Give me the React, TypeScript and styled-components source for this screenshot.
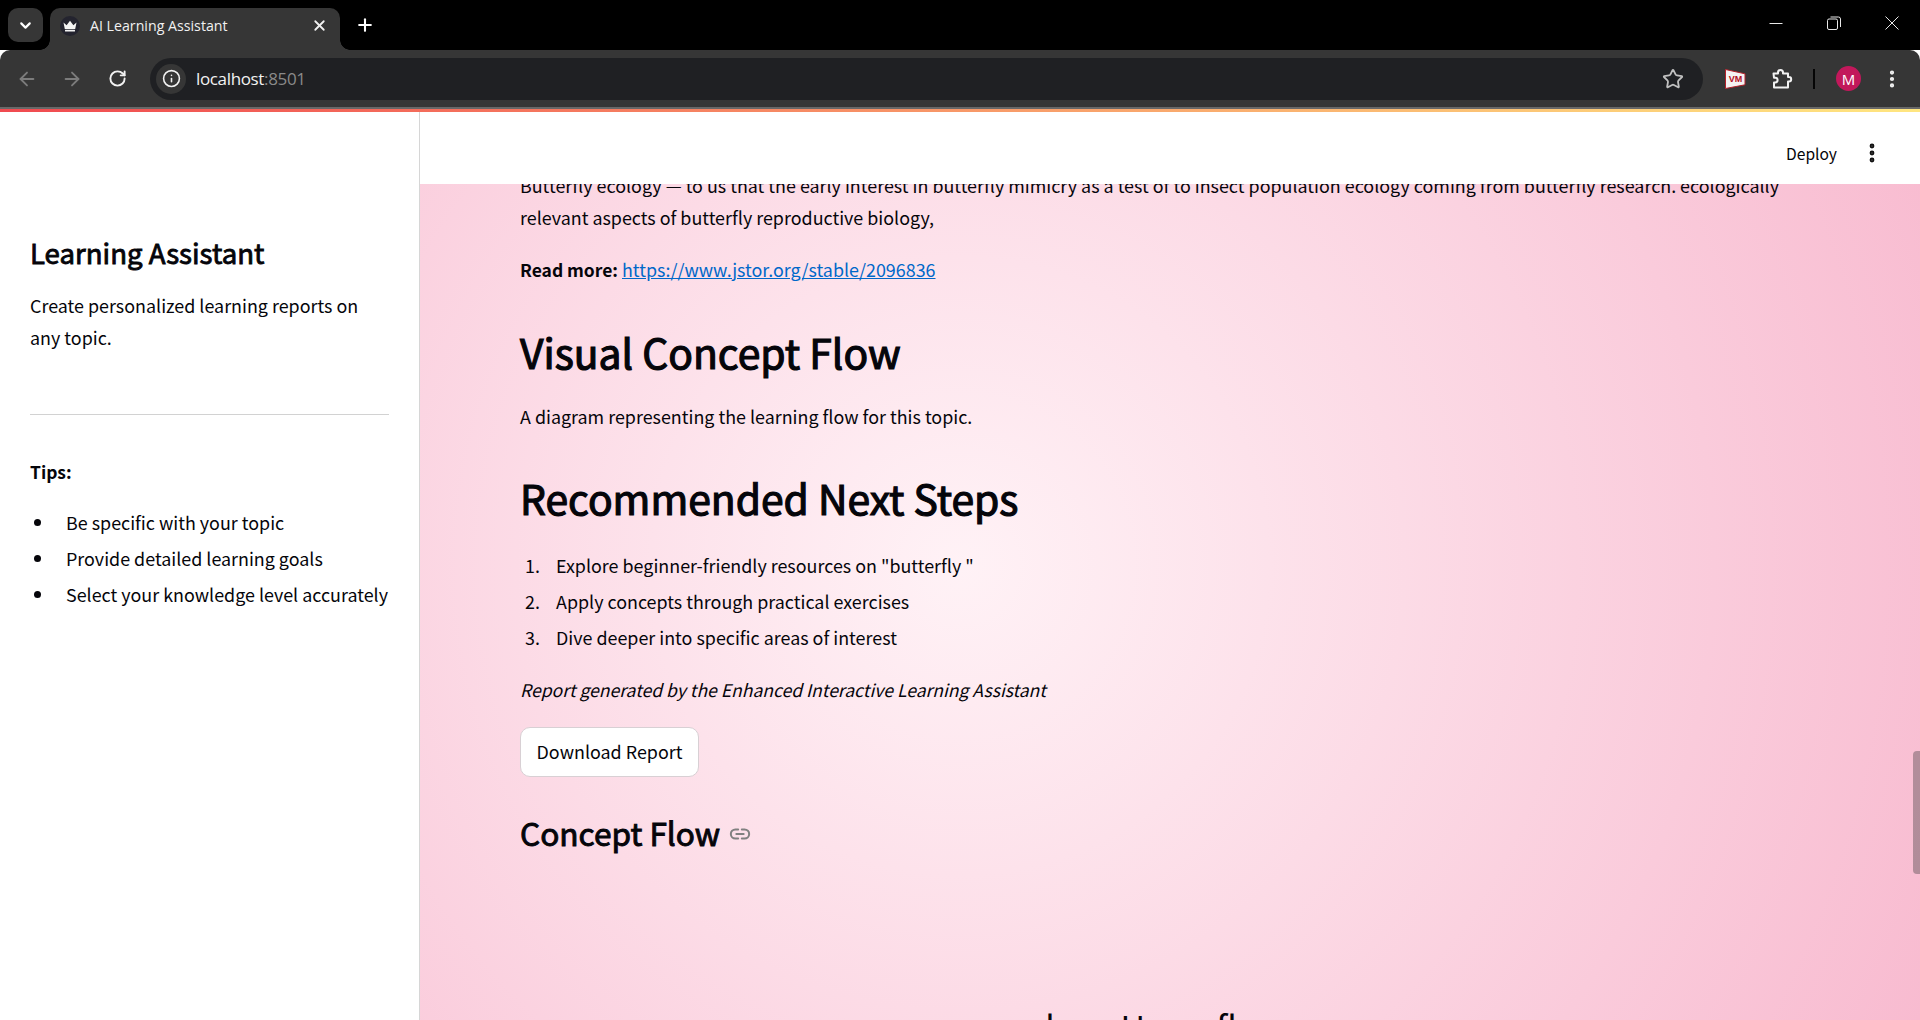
import React from "react";
import styled, { createGlobalStyle } from "styled-components";
import { ArrowLeft, ArrowRight, RotateCw, Star, ChevronDown, Plus, X, Info, EllipsisVertical } from "lucide-react";

const Global = createGlobalStyle`
  html, body { margin: 0; padding: 0; height: 100%; overflow: hidden; background: #fff; }
  #root { height: 100%; }
  * { box-sizing: border-box; }
  strong { font-size: 0.975em; }
  em { font-size: 0.98em; }
`;

const Page = styled.div`
  width: 1920px;
  height: 1020px;
  display: flex;
  flex-direction: column;
  overflow: hidden;
  font-family: "Noto Sans CJK SC", "Open Sans", sans-serif;
  color: #05050a;
`;

/* ---------- browser chrome ---------- */
const TabStrip = styled.div`
  height: 50px;
  background: #000;
  display: flex;
  align-items: flex-end;
  padding-left: 8px;
  flex: none;
`;
const TabSearch = styled.div`
  width: 35px;
  height: 34px;
  margin-bottom: 8px;
  border-radius: 10px;
  background: #363636;
  color: #fff;
  display: flex;
  align-items: center;
  justify-content: center;
`;
const Tab = styled.div`
  position: relative;
  width: 290px;
  height: 42px;
  margin-left: 7px;
  padding: 0 12px 7px 10px;
  background: #363636;
  border-radius: 10px 10px 0 0;
  display: flex;
  align-items: center;
  color: #f1f1f1;
  font-family: "Open Sans", sans-serif;
  font-size: 14.2px;
  &::before, &::after {
    content: "";
    position: absolute;
    bottom: 0;
    width: 10px;
    height: 10px;
  }
  &::before { left: -10px; background: radial-gradient(circle at 0 0, #000 9.5px, #363636 10px); }
  &::after { right: -10px; background: radial-gradient(circle at 100% 0, #000 9.5px, #363636 10px); }
`;
const Favicon = styled.div`
  width: 20px;
  height: 20px;
  border-radius: 50%;
  background: #24242f;
  display: flex;
  align-items: center;
  justify-content: center;
  margin-right: 10px;
  flex: none;
`;
const TabTitle = styled.span`
  flex: 1;
  white-space: nowrap;
`;
const NewTab = styled.div`
  margin: 0 0 8px 15px;
  height: 34px;
  display: flex;
  align-items: center;
  color: #fff;
`;
const WindowControls = styled.div`
  margin-left: auto;
  height: 50px;
  display: flex;
  align-items: center;
  color: #e8e8e8;
  padding: 0 21px 4px 0;
  gap: 44px;
`;
const Toolbar = styled.div`
  height: 57px;
  flex: none;
  background: #363636;
  border-radius: 10px 10px 0 0;
  display: flex;
  align-items: center;
  padding: 0 0 0 13px;
`;
const NavButton = styled.div<{ $dim?: boolean }>`
  width: 28px;
  display: flex;
  justify-content: center;
  color: ${(p) => (p.$dim ? "#7c7c7c" : "#f2f2f2")};
  margin-right: ${(p) => (p.$dim ? "17px" : "0")};
`;
const Omnibox = styled.div`
  width: 1553px;
  height: 42px;
  margin-left: 19px;
  border-radius: 21px;
  background: #1f2023;
  display: flex;
  align-items: center;
  padding: 0 0 0 6px;
  font-family: "Open Sans", sans-serif;
  font-size: 17px;
  letter-spacing: -0.35px;
`;
const SiteInfo = styled.div`
  width: 30px;
  height: 30px;
  border-radius: 50%;
  background: #363636;
  color: #f2f2f2;
  display: flex;
  align-items: center;
  justify-content: center;
  margin-right: 10px;
`;
const Host = styled.span`
  color: #f2f2f2;
`;
const Port = styled.span`
  color: #8a8a8a;
`;
const StarSlot = styled.div`
  margin-left: auto;
  margin-right: 19px;
  display: flex;
  color: #c0c0c0;
`;
const ToolbarIcons = styled.div`
  flex: 1;
  display: flex;
  align-items: center;
  padding-left: 21px;
`;
const IconSlot = styled.div<{ $gap: number }>`
  display: flex;
  align-items: center;
  margin-right: ${(p) => p.$gap}px;
  color: #f2f2f2;
`;
const Divider = styled.div`
  width: 2px;
  height: 20px;
  background: #050505;
  margin-right: 21px;
`;
const Avatar = styled.div`
  width: 25px;
  height: 25px;
  border-radius: 50%;
  background: #c2185b;
  color: #fff;
  font-family: "Open Sans", sans-serif;
  font-size: 15px;
  display: flex;
  align-items: center;
  justify-content: center;
  margin-right: 20px;
`;
const ChromeEdge = styled.div`
  height: 2px;
  flex: none;
  background: #686868;
`;
const Decoration = styled.div`
  height: 3px;
  flex: none;
  background: linear-gradient(90deg, #f04a50, #ffe680);
`;

/* ---------- app ---------- */
const Body = styled.div`
  flex: 1;
  min-height: 0;
  display: flex;
`;
const Sidebar = styled.aside`
  width: 420px;
  flex: none;
  background: #fff;
  border-right: 1px solid #d6d6d6;
  padding: 117px 30px 0;
`;
const SideTitle = styled.h2`
  margin: 0 0 14px;
  font-size: 27.6px;
  line-height: 46px;
  font-weight: 400;
  -webkit-text-stroke: 0.85px currentColor;
`;
const BodyText = styled.p<{ $gap?: number }>`
  margin: 0 0 ${(p) => p.$gap ?? 20}px;
  font-size: 17.9px;
  line-height: 32px;
`;
const TipsLabel = styled(BodyText)`
  margin-bottom: 18px;
`;
const Rule = styled.hr`
  margin: 61px 0 40px;
  border: none;
  border-top: 1px solid #d2d2d2;
`;
const BulletList = styled.ul`
  margin: 0;
  padding: 0;
  list-style: none;
  font-size: 17.9px;
  line-height: 32px;
  white-space: nowrap;
`;
const Bullet = styled.li`
  display: flex;
  align-items: center;
  margin-bottom: 4px;
  &::before {
    content: "";
    flex: none;
    width: 7px;
    height: 7px;
    border-radius: 50%;
    background: #05050a;
    margin: 0 25px 0 4px;
  }
`;
const OrderedList = styled.ol`
  margin: 0 0 20px;
  padding: 0;
  list-style: none;
  counter-reset: step;
  font-size: 17.9px;
  line-height: 32px;
`;
const Step = styled.li`
  display: flex;
  margin-bottom: 4px;
  counter-increment: step;
  &::before {
    content: counter(step) ".";
    flex: none;
    width: 31px;
    margin-left: 5px;
  }
`;
const Main = styled.main`
  position: relative;
  flex: 1;
  min-width: 0;
  display: flex;
  flex-direction: column;
  overflow: hidden;
  background: radial-gradient(circle at 540px 454px, #fff2f6 0%, #f8bbd0 100%);
`;
const Header = styled.header`
  height: 72px;
  flex: none;
  background: #fff;
  display: flex;
  align-items: center;
  justify-content: flex-end;
  padding: 10px 36px 0 0;
  font-size: 15.6px;
  position: relative;
  z-index: 1;
`;
const DeployLabel = styled.span`
  margin-right: 23px;
`;
const ScrollArea = styled.div`
  flex: 1;
  min-height: 0;
  overflow: hidden;
  padding: 0 100px;
`;
const Flow = styled.div`
  margin-top: -15px;
`;
const Link = styled.a`
  color: #0068c9;
  text-decoration: underline;
`;
const Heading = styled.h2<{ $top: number; $bottom: number }>`
  margin: ${(p) => p.$top}px 0 ${(p) => p.$bottom}px;
  font-size: 40.8px;
  line-height: 54px;
  font-weight: 400;
  -webkit-text-stroke: 1.2px currentColor;
`;
const SubHeading = styled.h3`
  margin: 34px 0 0;
  font-size: 31.6px;
  line-height: 42px;
  font-weight: 400;
  -webkit-text-stroke: 0.95px currentColor;
  display: flex;
  align-items: center;
  gap: 9px;
`;
const LinkIcon = styled.span`
  display: flex;
  color: #808080;
  margin-top: 4px;
  -webkit-text-stroke: 0;
`;
const DownloadButton = styled.button`
  display: block;
  width: 179px;
  height: 50px;
  background: #fff;
  border: 1px solid #d8d0d4;
  border-radius: 10px;
  font: inherit;
  font-size: 17.9px;
  color: inherit;
  padding: 0 0 2px;
`;
const ChartCaption = styled.div`
  margin-top: 152px;
  padding-right: 10px;
  text-align: center;
  font-size: 34px;
  line-height: 44px;
  white-space: nowrap;
`;
const Scrollbar = styled.div`
  position: absolute;
  right: 0;
  top: 639px;
  width: 7px;
  height: 123px;
  background: rgba(90, 80, 85, 0.45);
  border-radius: 4px 0 0 4px;
`;

const Crown = () => (
  <svg width="14" height="12" viewBox="0 0 14 12" fill="#f4f4f4">
    <path d="M0.5 2.5 L3.6 5.2 L7 0.8 L10.4 5.2 L13.5 2.5 L12.2 9 H1.8 Z" />
    <rect x="2" y="9.8" width="10" height="1.6" rx="0.5" />
  </svg>
);
const Vm = () => (
  <svg width="22" height="22" viewBox="0 0 22 22">
    <path d="M1.5 1.5 L21 5.8 V16.8 L1.5 20.5 Z" fill="#f5f2f2" stroke="#b3202a" strokeWidth="1" />
    <text x="11.5" y="13.8" textAnchor="middle" fontFamily="Liberation Sans, sans-serif" fontSize="9" fontWeight="700" fill="#b3101c">VM</text>
  </svg>
);
const Puzzle = () => (
  <svg width="22" height="22" viewBox="0 0 22 22" fill="none" stroke="currentColor" strokeWidth="2" strokeLinejoin="round">
    <path d="M2.5 5.5 H7 V4.5 a2.5 2.5 0 0 1 5 0 V5.5 H17 V9 h1 a2.2 2.2 0 0 1 0 4.4 h-1 V19.5 H3 V14.5 h1.2 a2.4 2.4 0 0 0 0 -4.8 H3 Z" />
  </svg>
);
const Minimize = () => (
  <svg width="14" height="14" viewBox="0 0 14 14" stroke="currentColor" strokeWidth="1"><path d="M0.5 7.5 H13.5" /></svg>
);
const Restore = () => (
  <svg width="14" height="14" viewBox="0 0 14 14" fill="none" stroke="currentColor" strokeWidth="1">
    <rect x="0.5" y="3" width="10" height="10.5" rx="1.5" />
    <path d="M3.5 1 H11.5 a2 2 0 0 1 2 2 V11" />
  </svg>
);
const CloseWin = () => (
  <svg width="14" height="14" viewBox="0 0 14 14" stroke="currentColor" strokeWidth="1"><path d="M0.5 0.5 L13.5 13.5 M13.5 0.5 L0.5 13.5" /></svg>
);
const Chain = () => (
  <svg width="22" height="22" viewBox="0 0 24 24" fill="none" stroke="currentColor" strokeWidth="2.2" strokeLinecap="round">
    <path d="M10 7 H7 a5 5 0 0 0 0 10 h3 M14 7 h3 a5 5 0 0 1 0 10 h-3 M8 12 h8" />
  </svg>
);

export default function App() {
  return (
    <Page>
      <Global />
      <TabStrip>
        <TabSearch><ChevronDown size={17} strokeWidth={3} /></TabSearch>
        <Tab>
          <Favicon><Crown /></Favicon>
          <TabTitle>AI Learning Assistant</TabTitle>
          <X size={17} strokeWidth={2.5} />
        </Tab>
        <NewTab><Plus size={20} strokeWidth={2.5} /></NewTab>
        <WindowControls>
          <Minimize />
          <Restore />
          <CloseWin />
        </WindowControls>
      </TabStrip>
      <Toolbar>
        <NavButton $dim><ArrowLeft size={22} strokeWidth={2} /></NavButton>
        <NavButton $dim><ArrowRight size={22} strokeWidth={2} /></NavButton>
        <NavButton><RotateCw size={19} strokeWidth={2.4} /></NavButton>
        <Omnibox>
          <SiteInfo><Info size={19} strokeWidth={2} /></SiteInfo>
          <Host>localhost</Host><Port>:8501</Port>
          <StarSlot><Star size={22} strokeWidth={2} /></StarSlot>
        </Omnibox>
        <ToolbarIcons>
          <IconSlot $gap={25}><Vm /></IconSlot>
          <IconSlot $gap={20}><Puzzle /></IconSlot>
          <Divider />
          <Avatar>M</Avatar>
          <IconSlot $gap={0}><EllipsisVertical size={22} strokeWidth={2.6} /></IconSlot>
        </ToolbarIcons>
      </Toolbar>
      <ChromeEdge />
      <Decoration />
      <Body>
        <Sidebar>
          <SideTitle>Learning Assistant</SideTitle>
          <BodyText $gap={0}>Create personalized learning reports on any topic.</BodyText>
          <Rule />
          <TipsLabel><strong>Tips:</strong></TipsLabel>
          <BulletList>
            <Bullet>Be specific with your topic</Bullet>
            <Bullet>Provide detailed learning goals</Bullet>
            <Bullet>Select your knowledge level accurately</Bullet>
          </BulletList>
        </Sidebar>
        <Main>
          <Header>
            <DeployLabel>Deploy</DeployLabel>
            <EllipsisVertical size={24} strokeWidth={2.8} color="#111" />
          </Header>
          <ScrollArea>
            <Flow>
              <BodyText>
                Butterfly ecology — to us that the early interest in butterfly mimicry as a test of to insect population ecology coming from butterfly research. ecologically relevant aspects of butterfly reproductive biology,
              </BodyText>
              <BodyText $gap={0}>
                <strong>Read more:</strong> <Link href="#">https://www.jstor.org/stable/2096836</Link>
              </BodyText>
              <Heading $top={39} $bottom={21}>Visual Concept Flow</Heading>
              <BodyText $gap={0}>A diagram representing the learning flow for this topic.</BodyText>
              <Heading $top={39} $bottom={24}>Recommended Next Steps</Heading>
              <OrderedList>
                <Step>Explore beginner-friendly resources on "butterfly "</Step>
                <Step>Apply concepts through practical exercises</Step>
                <Step>Dive deeper into specific areas of interest</Step>
              </OrderedList>
              <BodyText $gap={21}><em>Report generated by the Enhanced Interactive Learning Assistant</em></BodyText>
              <DownloadButton>Download Report</DownloadButton>
              <SubHeading>Concept Flow <LinkIcon><Chain /></LinkIcon></SubHeading>
              <ChartCaption>lean Users flow</ChartCaption>
            </Flow>
          </ScrollArea>
          <Scrollbar />
        </Main>
      </Body>
    </Page>
  );
}
